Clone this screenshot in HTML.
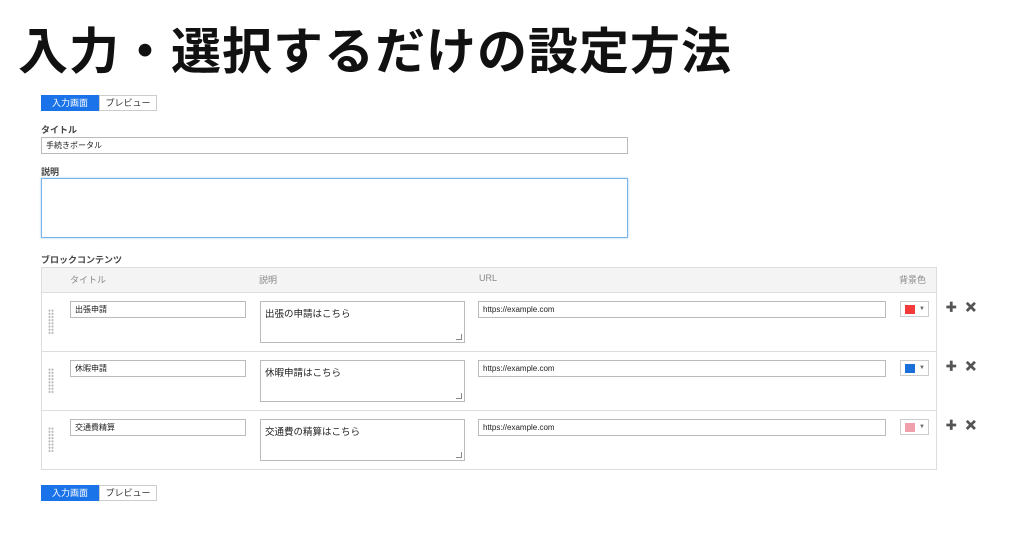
<!DOCTYPE html>
<html><head><meta charset="utf-8"><style>
*{box-sizing:border-box;margin:0;padding:0}
body{width:1024px;height:536px;background:#fff;font-family:"Liberation Sans","Noto Sans CJK JP",sans-serif;position:relative;overflow:hidden;color:#333}
.a{position:absolute}
h1{position:absolute;left:18px;top:18px;font-size:50px;font-weight:700;color:#111;letter-spacing:1px;white-space:nowrap;font-family:"Noto Sans CJK JP",sans-serif;line-height:60px}
.tabs{position:absolute;left:41px;display:flex;font-size:9px;height:16px}
.tabs div{width:58px;text-align:center;line-height:14px;border:1px solid #ccc}
.tabs .on{background:#1a73e8;color:#fff;border-color:#1a73e8}
.lbl{position:absolute;left:41px;font-size:9px;font-weight:bold;color:#444}
.inp{position:absolute;border:1px solid #bbb;background:#fff;font-size:8px;padding-left:4px;line-height:15px;color:#222}
.ta{position:absolute;border:1px solid #bbb;background:#fff;font-size:9.5px;padding:4px;color:#222}
.ta::after{content:"";position:absolute;right:2px;bottom:2px;width:5px;height:5px;border-right:1px solid #888;border-bottom:1px solid #888}
.row{position:absolute;left:41px;width:896px;height:59px;border-top:1px solid #ddd}
.grip{position:absolute;left:7px;top:16px;width:6px;height:26px;background-image:radial-gradient(circle,#bbb 1px,transparent 1.2px);background-size:3px 3.2px}
.sw{position:absolute;width:29px;height:16px;border:1px solid #ccc;background:#fff}
.sw i{position:absolute;left:4px;top:3px;width:10px;height:9px}
.sw b{position:absolute;left:18px;top:4px;font-size:6px;color:#666;font-weight:normal}
.pm{position:absolute;font-size:18px;font-weight:bold;color:#555;line-height:16px;-webkit-text-stroke:0.8px #555}
</style></head><body>
<h1>入力・選択するだけの設定方法</h1>
<div class="tabs" style="top:95px"><div class="on">入力画面</div><div>プレビュー</div></div>
<div class="lbl" style="top:123px">タイトル</div>
<div class="inp" style="left:41px;top:137px;width:587px;height:17px">手続きポータル</div>
<div class="lbl" style="top:165px">説明</div>
<div class="a" style="left:41px;top:178px;width:587px;height:60px;border:1px solid #7ab3e8;box-shadow:0 0 2px #9cc8f0"></div>
<div class="lbl" style="top:253px">ブロックコンテンツ</div>
<div class="a" style="left:41px;top:267px;width:896px;height:203px;border:1px solid #ddd"></div>
<div class="a" style="left:42px;top:268px;width:894px;height:24px;background:#f4f4f4;font-size:9px;color:#888">
<span class="a" style="left:28px;top:5px">タイトル</span><span class="a" style="left:217px;top:5px">説明</span><span class="a" style="left:437px;top:5px">URL</span><span class="a" style="left:857px;top:5px">背景色</span></div>

<div class="row" style="top:292px"><div class="grip"></div>
<div class="inp" style="left:29px;top:8px;width:176px;height:17px">出張申請</div>
<div class="ta" style="left:219px;top:8px;width:205px;height:42px">出張の申請はこちら</div>
<div class="inp" style="left:437px;top:8px;width:408px;height:17px">https://example.com</div>
<div class="sw" style="left:859px;top:8px"><i style="background:#f23a3a"></i><b>▼</b></div></div>

<div class="row" style="top:351px"><div class="grip"></div>
<div class="inp" style="left:29px;top:8px;width:176px;height:17px">休暇申請</div>
<div class="ta" style="left:219px;top:8px;width:205px;height:42px">休暇申請はこちら</div>
<div class="inp" style="left:437px;top:8px;width:408px;height:17px">https://example.com</div>
<div class="sw" style="left:859px;top:8px"><i style="background:#1a6fd8"></i><b>▼</b></div></div>

<div class="row" style="top:410px"><div class="grip"></div>
<div class="inp" style="left:29px;top:8px;width:176px;height:17px">交通費精算</div>
<div class="ta" style="left:219px;top:8px;width:205px;height:42px">交通費の精算はこちら</div>
<div class="inp" style="left:437px;top:8px;width:408px;height:17px">https://example.com</div>
<div class="sw" style="left:859px;top:8px"><i style="background:#f0a0aa"></i><b>▼</b></div></div>

<div class="pm" style="left:946px;top:299px">+</div><div class="pm" style="left:965px;top:299px;font-size:14px">✕</div>
<div class="pm" style="left:946px;top:358px">+</div><div class="pm" style="left:965px;top:358px;font-size:14px">✕</div>
<div class="pm" style="left:946px;top:417px">+</div><div class="pm" style="left:965px;top:417px;font-size:14px">✕</div>

<div class="tabs" style="top:485px"><div class="on">入力画面</div><div>プレビュー</div></div>
</body></html>
